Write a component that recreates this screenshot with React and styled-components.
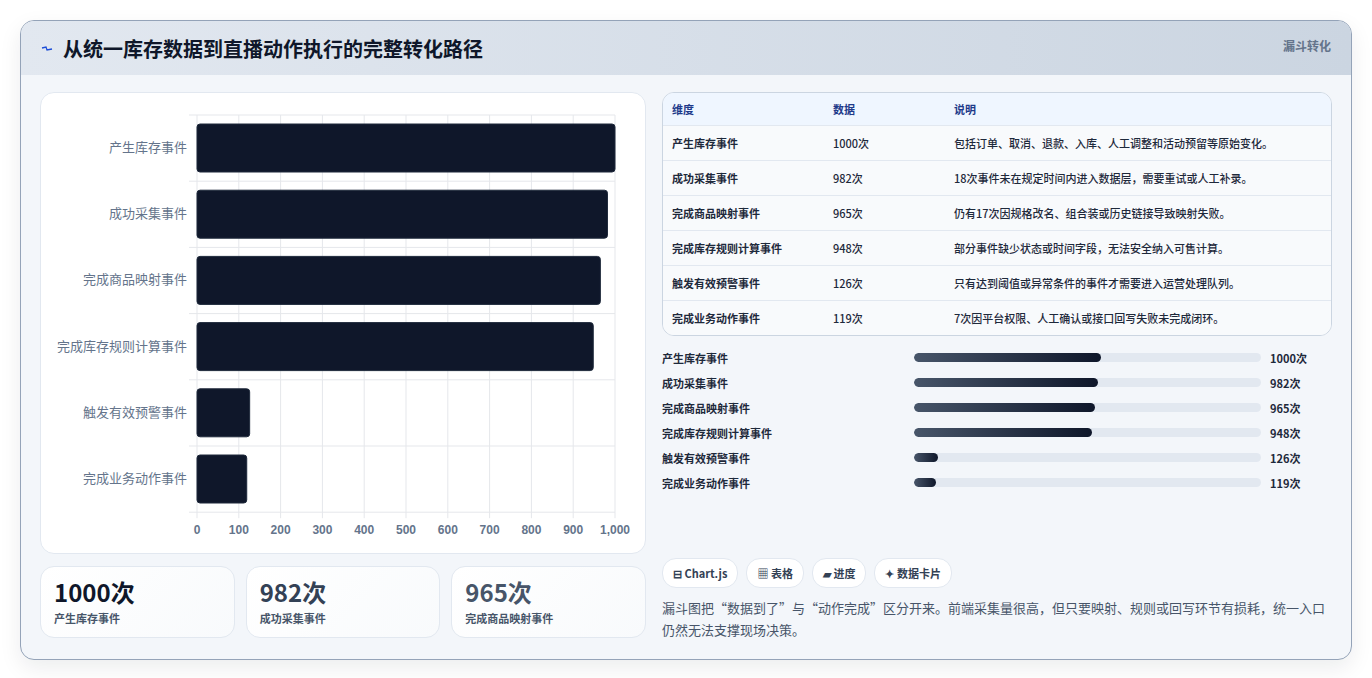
import React from 'react'
import styled, { createGlobalStyle } from 'styled-components'

const Global = createGlobalStyle`
  body {
    margin: 0;
    background: #ffffff;
    font-family: "Noto Sans CJK SC", "Noto Sans", sans-serif;
  }
`

const rows = [
  { name: '产生库存事件', value: 1000, note: '包括订单、取消、退款、入库、人工调整和活动预留等原始变化。' },
  { name: '成功采集事件', value: 982, note: '18次事件未在规定时间内进入数据层，需要重试或人工补录。' },
  { name: '完成商品映射事件', value: 965, note: '仍有17次因规格改名、组合装或历史链接导致映射失败。' },
  { name: '完成库存规则计算事件', value: 948, note: '部分事件缺少状态或时间字段，无法安全纳入可售计算。' },
  { name: '触发有效预警事件', value: 126, note: '只有达到阈值或异常条件的事件才需要进入运营处理队列。' },
  { name: '完成业务动作事件', value: 119, note: '7次因平台权限、人工确认或接口回写失败未完成闭环。' },
]

const Page = styled.div`
  padding: 20px 20px 20px 20px;
  width: 1332px;
`

const Card = styled.div`
  border: 1px solid #94a3b8;
  border-radius: 14px;
  overflow: hidden;
  background: #f3f6fa;
  box-shadow: 0 8px 22px rgba(15, 23, 42, 0.08);
`

const Header = styled.div`
  height: 54px;
  display: flex;
  align-items: center;
  justify-content: space-between;
  padding: 0 20px 0 20px;
  background: linear-gradient(90deg, #e2e8f0, #cbd5e1);
`

const Title = styled.h1`
  margin: 0;
  font-size: 20px;
  font-weight: 700;
  color: #0f172a;
  display: flex;
  align-items: center;
  gap: 10px;
`

const Tag = styled.span`
  font-size: 12px;
  font-weight: 700;
  color: #64748b;
  align-self: flex-start;
  margin-top: 16px;
`

const Body = styled.div`
  display: grid;
  grid-template-columns: 606px 670px;
  gap: 16px;
  padding: 17px 19px 18px 19px;
`

const Col = styled.div`
  display: flex;
  flex-direction: column;
`

const ChartBox = styled.div`
  height: 460px;
  background: #ffffff;
  border: 1px solid #e2e8f0;
  border-radius: 14px;
`

const Kpis = styled.div`
  display: grid;
  grid-template-columns: repeat(3, 1fr);
  gap: 11px;
  margin-top: 12px;
`

const Kpi = styled.div`
  height: 72px;
  box-sizing: border-box;
  border: 1px solid #e2e8f0;
  border-radius: 14px;
  background: linear-gradient(135deg, #ffffff, #f8fafc);
  padding: 10px 13px;
`

const KpiValue = styled.div`
  font-size: 24px;
  font-weight: 700;
  line-height: 30px;
  color: ${p => p.$color};
`

const KpiLabel = styled.div`
  font-size: 11px;
  font-weight: 700;
  color: #475569;
  margin-top: 3px;
`

const Table = styled.div`
  border: 1px solid #cbd5e1;
  border-radius: 12px;
  overflow: hidden;
  background: #f8fafc;
`

const Tr = styled.div`
  display: grid;
  grid-template-columns: 161px 121px 1fr;
  height: ${p => (p.$head ? '32px' : '35px')};
  align-items: center;
  padding-left: 9px;
  font-size: 11px;
  font-weight: ${p => (p.$head ? 700 : 500)};
  color: ${p => (p.$head ? '#1e3a8a' : '#1e293b')};
  background: ${p => (p.$head ? '#eff6ff' : '#f8fafc')};
  border-top: ${p => (p.$head ? 'none' : '1px solid #e2e8f0')};
  box-sizing: border-box;
`

const Bars = styled.div`
  display: flex;
  flex-direction: column;
  margin-top: 9px;
`

const BarRow = styled.div`
  display: grid;
  grid-template-columns: 252px 347px 1fr;
  align-items: center;
  height: 25px;
  font-size: 11px;
  font-weight: 700;
  color: #1e293b;
`

const Track = styled.div`
  height: 9px;
  border-radius: 5px;
  background: #e2e8f0;
  overflow: hidden;
`

const Fill = styled.div`
  height: 100%;
  border-radius: 5px;
  background: linear-gradient(90deg, #475569, #0f172a);
`

const BarVal = styled.span`
  padding-left: 9px;
`

const Chips = styled.div`
  display: flex;
  gap: 8px;
  margin-top: 63px;
`

const Chip = styled.span`
  height: 28px;
  display: flex;
  align-items: center;
  padding: 0 10px;
  border-radius: 14px;
  background: #ffffff;
  border: 1px solid #e2e8f0;
  font-size: 11px;
  font-weight: 700;
  color: #334155;
  gap: 3px;
`

const Para = styled.p`
  margin: 9px 0 0 0;
  font-size: 13px;
  line-height: 22px;
  color: #475569;
`

const Chart = () => {
  const x0 = 156, x1 = 574, y0 = 22, rowH = 66.2
  const sx = v => x0 + ((x1 - x0) * v) / 1000
  const ticks = [0, 100, 200, 300, 400, 500, 600, 700, 800, 900, 1000]
  return (
    <svg width="606" height="460" style={{ display: 'block' }}>
      {ticks.map(t => (
        <line key={t} x1={sx(t)} x2={sx(t)} y1={y0} y2={y0 + rowH * 6 + 6} stroke="#e5e7eb" />
      ))}
      {Array.from({ length: 7 }).map((_, i) => (
        <line key={i} x1={x0 - 8} x2={x1} y1={y0 + rowH * i} y2={y0 + rowH * i} stroke="#e5e7eb" />
      ))}
      {rows.map((r, i) => (
        <g key={r.name}>
          <rect x={x0} y={y0 + rowH * i + 9} width={sx(r.value) - x0} height={48} rx="3" fill="#0f172a" stroke="#1e293b" />
          <text x={x0 - 10} y={y0 + rowH * i + 37} textAnchor="end" fontSize="13" fill="#64748b" fontFamily="Noto Sans CJK SC, sans-serif">{r.name}</text>
        </g>
      ))}
      {ticks.map(t => (
        <text key={t} x={sx(t)} y={y0 + rowH * 6 + 22} textAnchor="middle" fontSize="12" fontWeight="700" fill="#64748b" fontFamily="Liberation Sans, sans-serif">{t === 1000 ? '1,000' : t}</text>
      ))}
    </svg>
  )
}

export default function App() {
  return (
    <Page>
      <Global />
      <Card>
        <Header>
          <Title>
            <svg width="12" height="8" viewBox="0 0 12 8"><path d="M1 4 L5 3 L6 6 L11 5" stroke="#1d4ed8" strokeWidth="1.3" fill="none" /></svg>
            从统一库存数据到直播动作执行的完整转化路径
          </Title>
          <Tag>漏斗转化</Tag>
        </Header>
        <Body>
          <Col>
            <ChartBox><Chart /></ChartBox>
            <Kpis>
              <Kpi><KpiValue $color="#0f172a">1000次</KpiValue><KpiLabel>产生库存事件</KpiLabel></Kpi>
              <Kpi><KpiValue $color="#334155">982次</KpiValue><KpiLabel>成功采集事件</KpiLabel></Kpi>
              <Kpi><KpiValue $color="#475569">965次</KpiValue><KpiLabel>完成商品映射事件</KpiLabel></Kpi>
            </Kpis>
          </Col>
          <Col>
            <Table>
              <Tr $head><span>维度</span><span>数据</span><span>说明</span></Tr>
              {rows.map(r => (
                <Tr key={r.name}><span style={{ fontWeight: 700 }}>{r.name}</span><span>{r.value}次</span><span>{r.note}</span></Tr>
              ))}
            </Table>
            <Bars>
              {rows.map(r => (
                <BarRow key={r.name}>
                  <span>{r.name}</span>
                  <Track><Fill style={{ width: `${(r.value / 1000) * 54}%` }} /></Track>
                  <BarVal>{r.value}次</BarVal>
                </BarRow>
              ))}
            </Bars>
            <Chips>
              <Chip>⊟ Chart.js</Chip>
              <Chip>▦ 表格</Chip>
              <Chip>▰ 进度</Chip>
              <Chip>✦ 数据卡片</Chip>
            </Chips>
            <Para>漏斗图把“数据到了”与“动作完成”区分开来。前端采集量很高，但只要映射、规则或回写环节有损耗，统一入口仍然无法支撑现场决策。</Para>
          </Col>
        </Body>
      </Card>
    </Page>
  )
}
